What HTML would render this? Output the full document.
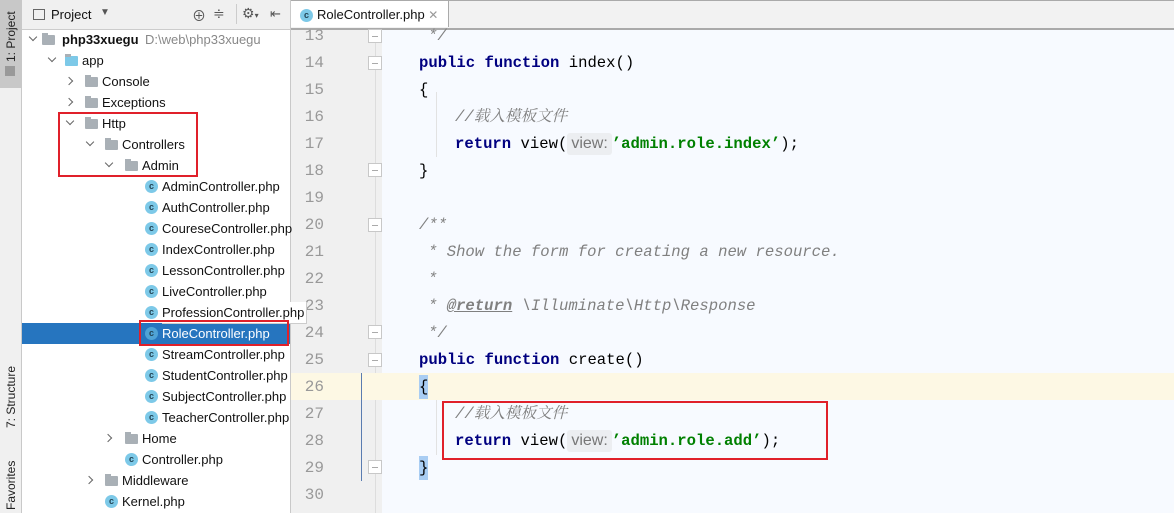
<!DOCTYPE html>
<html><head><meta charset="utf-8"><style>
*{margin:0;padding:0;box-sizing:border-box}
body{width:1174px;height:513px;overflow:hidden;background:#fff;font-family:"Liberation Sans","Noto Sans CJK SC",sans-serif;position:relative}
.a{position:absolute}
.strip{left:0;top:0;width:22px;height:513px;background:#f0f0f0;border-right:1px solid #c9c9c9}
.vt{position:absolute;transform:rotate(-90deg);transform-origin:left top;font-size:12px;color:#222;white-space:nowrap}
.row{position:absolute;left:22px;width:268px;height:21px;font-size:13px;line-height:21px;color:#111;white-space:nowrap}
.row span{position:absolute;top:0}
.fold{position:absolute;width:13px;height:10px;top:6px;background:#a9b0b6;border-radius:1px}
.fold:before{content:"";position:absolute;left:0;top:-2px;width:6px;height:3px;background:#a9b0b6}
.ci{position:absolute;top:4px;width:13px;height:13px;border-radius:50%;background:#7dc9e8;color:#245;font-size:9px;line-height:13px;text-align:center;font-weight:bold}
.ar,.ad{position:absolute;width:6px;height:6px;border-right:1.5px solid #666;border-bottom:1.5px solid #666}
.ar{top:7px;transform:rotate(-45deg)}
.ad{top:5px;transform:rotate(45deg)}
.code{position:absolute;left:382px;right:0;top:27px;bottom:0;background:#f7faff}
.ln{position:absolute;left:290px;width:34px;text-align:right;font-family:"Liberation Mono",monospace;font-size:16px;color:#999;height:27px;line-height:27px}
.cl{position:absolute;font-family:"Liberation Mono","Noto Serif CJK SC",monospace;font-size:15.6px;height:27px;line-height:27px;white-space:pre;color:#000}
.k{color:#000080;font-weight:bold}
.c{color:#808080;font-style:italic}
.s{color:#008000;font-weight:bold}
.h{display:inline-block;background:#eceef1;color:#777;font-family:"Liberation Sans",sans-serif;font-size:16px;line-height:22px;padding:0 4px;border-radius:3px}
.fm{position:absolute;left:368px;width:14px;height:14px;border:1px solid #c8c8c8;background:#fff}
.fm:after{content:"";position:absolute;left:3px;top:6px;width:6px;height:1px;background:#aaa}
.red{position:absolute;border:2px solid #e0202a;z-index:5}
</style></head><body>
<div class="a strip"></div>
<div class="a" style="left:0;top:0;width:22px;height:88px;background:#c8c8c8"></div>
<div class="vt" style="left:4px;top:62px;">1: Project</div>
<div class="a" style="left:5px;top:66px;width:10px;height:10px;background:#999"></div>
<div class="vt" style="left:4px;top:428px;">7: Structure</div>
<div class="vt" style="left:4px;top:510px;">Favorites</div>

<!-- editor -->
<div class="a" style="left:291px;top:0;right:0;height:30px;background:#f2f2f2;border-top:1px solid #aaa;border-bottom:1px solid #aaa"></div>
<div class="a" style="left:291px;top:1px;width:158px;height:26px;background:#fff;border-right:1px solid #aaa"></div>
<div class="ci" style="left:300px;top:9px">c</div>
<div class="a" style="left:317px;top:7px;font-size:13px;color:#111">RoleController.php <span style="color:#999;font-size:12px">✕</span></div>
<div class="a" style="left:291px;top:28px;right:0;height:1px;background:#aaa"></div>
<div class="a" style="left:291px;top:30px;width:91px;bottom:0;background:#f0f0f0"></div>
<div class="a" style="left:375px;top:30px;width:1px;bottom:0;background:#ddd"></div>
<div class="code" style="top:30px"></div>
<div class="a" style="left:291px;top:373px;right:0;height:27px;background:#fdf8e4"></div>
<div class="a" style="left:361px;top:373px;width:1px;height:108px;background:#5a7cb0"></div>
<div class="a" style="left:419px;top:375px;width:9px;height:24px;background:#a9cdf3"></div>
<div class="a" style="left:419px;top:456px;width:9px;height:24px;background:#a9cdf3"></div>
<div class="a" style="left:436px;top:92px;width:1px;height:65px;background:#e2e2e2"></div>
<div class="a" style="left:436px;top:400px;width:1px;height:55px;background:#e2e2e2"></div>

<div class="ln" style="top:23px">13</div><div class="ln" style="top:50px">14</div><div class="ln" style="top:77px">15</div><div class="ln" style="top:104px">16</div><div class="ln" style="top:131px">17</div><div class="ln" style="top:158px">18</div><div class="ln" style="top:185px">19</div><div class="ln" style="top:212px">20</div><div class="ln" style="top:239px">21</div><div class="ln" style="top:266px">22</div><div class="ln" style="top:293px">23</div><div class="ln" style="top:320px">24</div><div class="ln" style="top:347px">25</div><div class="ln" style="top:374px">26</div><div class="ln" style="top:401px">27</div><div class="ln" style="top:428px">28</div><div class="ln" style="top:455px">29</div><div class="ln" style="top:482px">30</div>

<div class="fm" style="top:29px"></div><div class="fm" style="top:56px"></div><div class="fm" style="top:163px"></div><div class="fm" style="top:218px"></div><div class="fm" style="top:325px"></div><div class="fm" style="top:353px"></div><div class="fm" style="top:460px"></div>

<div class="cl c" style="left:428px;top:23px">*/</div>
<div class="cl" style="left:419px;top:50px"><span class="k">public function</span> index()</div>
<div class="cl" style="left:419px;top:77px">{</div>
<div class="cl c" style="left:455px;top:104px">//载入模板文件</div>
<div class="cl" style="left:455px;top:131px"><span class="k">return</span> view(<span class="h">view:</span><span class="s">’admin.role.index’</span>);</div>
<div class="cl" style="left:419px;top:158px">}</div>
<div class="cl c" style="left:419px;top:212px">/**</div>
<div class="cl c" style="left:428px;top:239px">* Show the form for creating a new resource.</div>
<div class="cl c" style="left:428px;top:266px">*</div>
<div class="cl c" style="left:428px;top:293px">* <span style="text-decoration:underline;font-weight:bold">@return</span> \Illuminate\Http\Response</div>
<div class="cl c" style="left:428px;top:320px">*/</div>
<div class="cl" style="left:419px;top:347px"><span class="k">public function</span> create()</div>
<div class="cl" style="left:419px;top:374px">{</div>
<div class="cl c" style="left:455px;top:401px">//载入模板文件</div>
<div class="cl" style="left:455px;top:428px"><span class="k">return</span> view(<span class="h">view:</span><span class="s">’admin.role.add’</span>);</div>
<div class="cl" style="left:419px;top:455px">}</div>

<div class="red" style="left:442px;top:401px;width:386px;height:59px"></div>

<!-- project header -->
<div class="a" style="left:22px;top:0;width:268px;height:30px;background:#f0f0f0;border-bottom:1px solid #ccc"></div>
<div class="a" style="left:33px;top:9px;width:12px;height:11px;border:1px solid #666"></div>
<div class="a" style="left:51px;top:7px;font-size:13px;color:#111">Project</div>
<div class="a" style="left:100px;top:7px;font-size:10px;color:#555">▼</div>
<div class="a" style="left:192px;top:6px;font-size:14px;color:#555">⊕</div>
<div class="a" style="left:213px;top:5px;font-size:14px;color:#555">≑</div>
<div class="a" style="left:236px;top:4px;width:1px;height:20px;background:#ccc"></div>
<div class="a" style="left:242px;top:5px;font-size:14px;color:#555">⚙<span style="font-size:8px">▾</span></div>
<div class="a" style="left:270px;top:6px;font-size:13px;color:#555">⇤</div>
<div class="a" style="left:290px;top:0;width:1px;height:513px;background:#c9c9c9"></div>

<!-- tree -->
<div class="row" style="top:29px"><i class="ad" style="left:8px"></i><div class="fold" style="left:20px"></div><span style="left:40px;font-weight:bold">php33xuegu</span><span style="left:123px;color:#888">D:\web\php33xuegu</span></div>
<div class="row" style="top:50px"><i class="ad" style="left:27px"></i><div class="fold" style="left:43px;background:#7dc9e8"></div><span style="left:60px">app</span></div>
<div class="row" style="top:71px"><i class="ar" style="left:44px"></i><div class="fold" style="left:63px"></div><span style="left:80px">Console</span></div>
<div class="row" style="top:92px"><i class="ar" style="left:44px"></i><div class="fold" style="left:63px"></div><span style="left:80px">Exceptions</span></div>
<div class="row" style="top:113px"><i class="ad" style="left:45px"></i><div class="fold" style="left:63px"></div><span style="left:80px">Http</span></div>
<div class="row" style="top:134px"><i class="ad" style="left:65px"></i><div class="fold" style="left:83px"></div><span style="left:100px">Controllers</span></div>
<div class="row" style="top:155px"><i class="ad" style="left:84px"></i><div class="fold" style="left:103px"></div><span style="left:120px">Admin</span></div>
<div class="row" style="top:176px"><div class="ci" style="left:123px">c</div><span style="left:140px">AdminController.php</span></div>
<div class="row" style="top:197px"><div class="ci" style="left:123px">c</div><span style="left:140px">AuthController.php</span></div>
<div class="row" style="top:218px"><div class="ci" style="left:123px">c</div><span style="left:140px">CoureseController.php</span></div>
<div class="row" style="top:239px"><div class="ci" style="left:123px">c</div><span style="left:140px">IndexController.php</span></div>
<div class="row" style="top:260px"><div class="ci" style="left:123px">c</div><span style="left:140px">LessonController.php</span></div>
<div class="row" style="top:281px"><div class="ci" style="left:123px">c</div><span style="left:140px">LiveController.php</span></div>
<div class="row" style="top:302px;overflow:visible;width:290px;z-index:4"><div class="ci" style="left:123px">c</div><span style="left:140px;background:#fff;padding-right:2px;border-right:1px solid #ccc;border-bottom:1px solid #ccc">ProfessionController.php</span></div>
<div class="row" style="top:323px;background:#2675bf;color:#fff"><div class="ci" style="left:123px;background:#4fa3d6">c</div><span style="left:140px">RoleController.php</span></div>
<div class="row" style="top:344px"><div class="ci" style="left:123px">c</div><span style="left:140px">StreamController.php</span></div>
<div class="row" style="top:365px"><div class="ci" style="left:123px">c</div><span style="left:140px">StudentController.php</span></div>
<div class="row" style="top:386px"><div class="ci" style="left:123px">c</div><span style="left:140px">SubjectController.php</span></div>
<div class="row" style="top:407px"><div class="ci" style="left:123px">c</div><span style="left:140px">TeacherController.php</span></div>
<div class="row" style="top:428px"><i class="ar" style="left:83px"></i><div class="fold" style="left:103px"></div><span style="left:120px">Home</span></div>
<div class="row" style="top:449px"><div class="ci" style="left:103px">c</div><span style="left:120px">Controller.php</span></div>
<div class="row" style="top:470px"><i class="ar" style="left:64px"></i><div class="fold" style="left:83px"></div><span style="left:100px">Middleware</span></div>
<div class="row" style="top:491px"><div class="ci" style="left:83px">c</div><span style="left:100px">Kernel.php</span></div>

<div class="red" style="left:58px;top:112px;width:140px;height:65px"></div>
<div class="red" style="left:139px;top:320px;width:150px;height:26px"></div>
</body></html>
